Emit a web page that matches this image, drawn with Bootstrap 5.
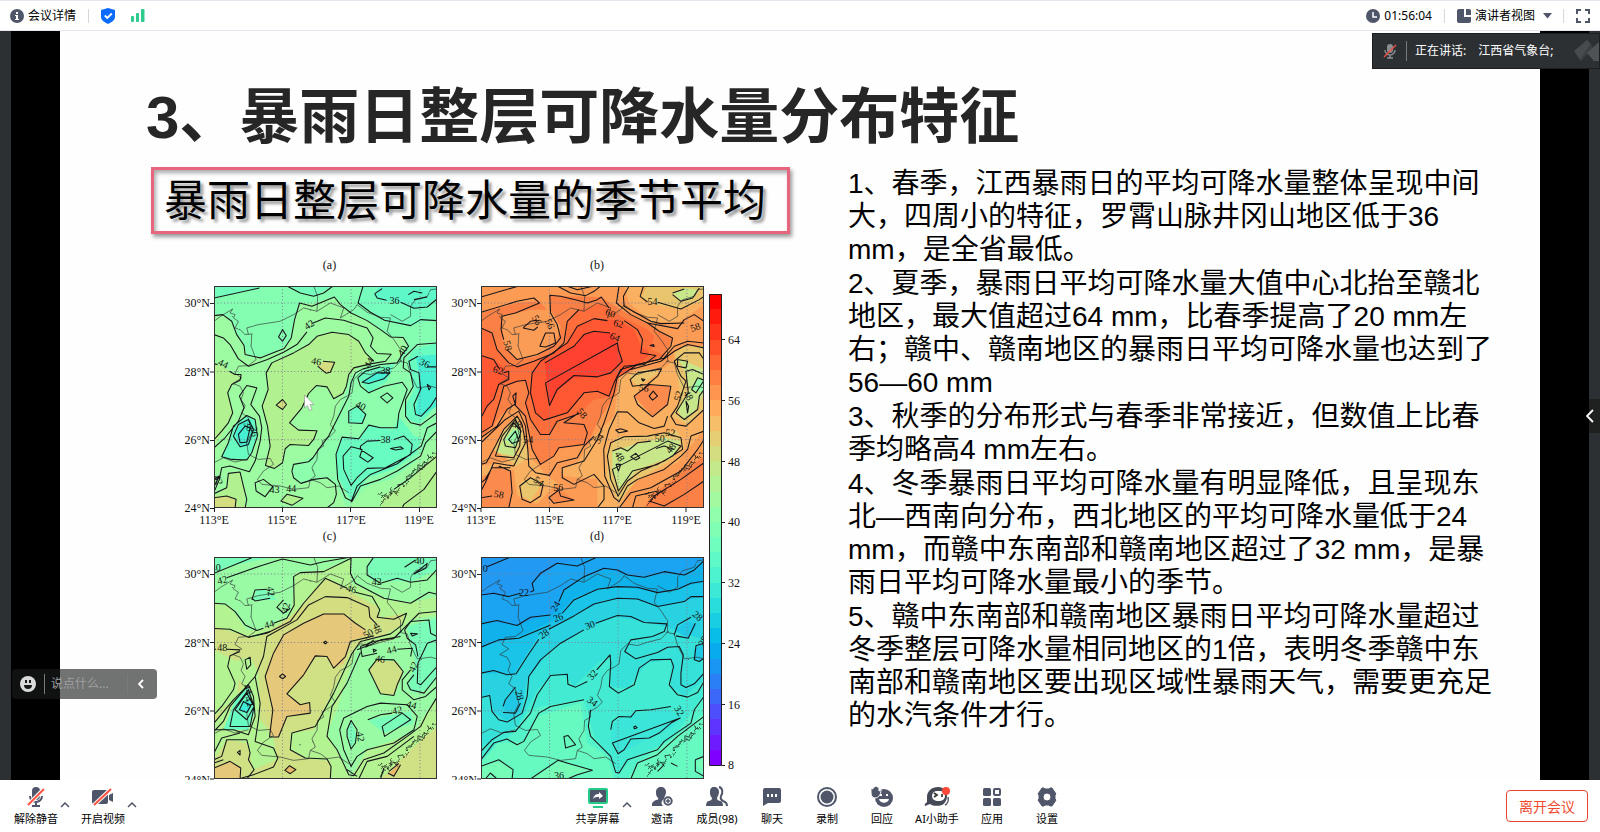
<!DOCTYPE html>
<html lang="zh-CN">
<head>
<meta charset="utf-8">
<meta name="viewport" content="width=device-width, initial-scale=1">
<title>会议</title>
<link href="https://cdn.jsdelivr.net/npm/bootstrap@5.3.0/dist/css/bootstrap.min.css" rel="stylesheet">
<style>
:root{--ink:#50566a;--stage:#2c3033}
body{font-family:"Noto Sans","Noto Sans CJK SC",sans-serif;font-size:12px;line-height:16px;color:#000;background:#fff;overflow:hidden}
button{border:0;background:none;padding:0;color:inherit;font-size:inherit;line-height:inherit}
svg{display:block;flex:none}
.topbar{height:31px;border-top:1px solid #e6e6ee;border-bottom:1px solid #e6e6ee;padding:0 10px}
.rule{width:1px;height:14px;background:#d6d8de}
.view-rule{margin-left:11px}
.stage{background:var(--stage);padding:0 11px;min-height:0}
.letterbox{background:#000;padding:0 49px}
.slide{background:#fefefe;padding:47px 0 0 86px}
.slide h1{font:bold 60px/80px "Liberation Sans","Noto Sans CJK SC",sans-serif;color:#262626;margin:0;white-space:nowrap}
.left-pane{flex:0 0 702px}
.subtitle{width:639px;height:67px;margin:9px 0 16px 5px;border:3px solid #e8667d;box-shadow:2px 3px 4px #0006,inset 2px 3px 4px #0005;font:43px/63px "Liberation Sans","Noto Sans CJK SC",sans-serif;padding-left:10px;text-shadow:3px 3px 3px #0006;white-space:nowrap}
.figure-wrap{margin-left:34px}
.notes{font:28px/33px "Liberation Sans","Noto Sans CJK SC",sans-serif;padding-top:9px;gap:1px;white-space:nowrap}
.notes p{margin:0}
.speaking{top:2px;right:0;width:228px;height:36px;background:var(--stage);border:1px solid #1c1e20;color:#fff;padding-left:9px}
.chat-pill{left:12px;bottom:81px;width:145px;height:30px;border-radius:4px;background:rgba(26,27,28,.62);padding:0 13px 0 8px}
.chat-pill .rule,.speaking .rule{background:#77797b;height:20px}
.chat-pill input{width:68px;background:none;border:0;padding:0;margin-left:6px;color:#fff;outline:0}
.chat-pill input::placeholder{color:#a0a0a0;opacity:1}
.side-toggle{right:0;top:368px;width:11px;height:34px;background:#1f2020}
.side-toggle svg{margin-left:-3px}
.toolbar{height:52px;display:grid;grid-template-columns:1fr auto 1fr;font-size:11px;padding:5px 12px 0 14px}
.tool{width:55px;height:44px;white-space:nowrap}
.tool svg{margin-bottom:2px}
.tool-tight{width:44px}
.caret{width:15px;height:44px;padding:0 0 4px 2px}
.center-tools{padding-left:48px}
.leave{width:82px;height:32px;border:1px solid #e8432f;border-radius:4px;color:#f04a2f;font-size:14px;margin-top:5px}
.leave:hover{background:#fff1ee;color:#f04a2f}
.axis{font:12px "Liberation Serif",serif;fill:#111}
.lvl{font:30px "Liberation Serif",serif;fill:#111}
.iso{fill:none;stroke:#15151a;stroke-width:3.2;stroke-linejoin:round}
.grid-line{fill:none;stroke:#7d7d92;stroke-width:3;stroke-dasharray:3 7}
.border-line{fill:none;stroke:#333a3a;stroke-width:2}
.coast{fill:none;stroke:#111;stroke-width:2.2}
</style>
</head>
<body class="d-flex flex-column vh-100">
<header class="topbar d-flex align-items-center">
  <button class="d-flex align-items-center pe-1" type="button">
    <svg width="14" height="14" viewBox="0 0 14 14"><circle cx="7" cy="7" r="7" fill="#50566a"/><path d="M6 3h2v2H6zM5 6h3v4h1v1H5v-1h1V7H5z" fill="#fff"/></svg>
    <span class="ms-1">会议详情</span>
  </button>
  <span class="rule ms-2 me-2"></span>
  <button type="button" aria-label="安全" class="ms-1"><svg width="14" height="16" viewBox="0 0 14 16"><path d="M7 0l7 2v7c0 3-3 5-7 7C3 14 0 12 0 9V2z" fill="#0a6cff"/><path d="M3.800 7.500l2.500 2.500 4.500-4.500" fill="none" stroke="#fff" stroke-width="1.800"/></svg></button>
  <button type="button" aria-label="网络" class="ms-3"><svg width="14" height="13" viewBox="0 0 14 13" fill="#2ecb8f"><rect y="7" width="3" height="6" rx="1"/><rect x="5" y="4" width="3" height="9" rx="1"/><rect x="10" width="3.500" height="13" rx="1"/></svg></button>
  <div class="ms-auto d-flex align-items-center">
    <svg width="14" height="14" viewBox="0 0 14 14"><circle cx="7" cy="7" r="7" fill="#50566a"/><path d="M7 3v5h4" fill="none" stroke="#fff" stroke-width="1.500"/></svg>
    <span class="ms-1 me-2">01:56:04</span>
    <span class="rule ms-1 me-2"></span>
    <button type="button" class="d-flex align-items-center ms-1">
      <svg width="14" height="14" viewBox="0 0 14 14" fill="#50566a"><path d="M2 0h5v8h7v4a2 2 0 0 1-2 2H2a2 2 0 0 1-2-2V2a2 2 0 0 1 2-2z"/><path d="M9 0h3a2 2 0 0 1 2 2v4H9z"/></svg>
      <span class="ms-1 me-1">演讲者视图</span>
      <svg class="ms-1" width="9" height="6" viewBox="0 0 9 6"><path d="M0 0h9L4.500 5.500z" fill="#50566a"/></svg>
    </button>
    <span class="rule view-rule me-2"></span>
    <button type="button" aria-label="全屏" class="ms-1"><svg width="14" height="14" viewBox="0 0 14 14"><path d="M5 1H1v4M9 1h4v4M5 13H1V9M9 13h4V9" fill="none" stroke="#50566a" stroke-width="2"/></svg></button>
  </div>
</header>

<main class="stage position-relative flex-grow-1 overflow-hidden">
  <div class="letterbox h-100">
    <section class="slide h-100 overflow-hidden">
      <h1>3、暴雨日整层可降水量分布特征</h1>
      <div class="d-flex">
        <div class="left-pane">
          <div class="subtitle">暴雨日整层可降水量的季节平均</div>
          <div class="figure-wrap">
<svg width="580" height="530" viewBox="180 250 580 530" role="img" aria-label="四季可降水量分布图">
<defs>
<filter id="rough" x="-5%" y="-5%" width="110%" height="110%"><feTurbulence type="fractalNoise" baseFrequency=".2" numOctaves="2" seed="4"/><feDisplacementMap in="SourceGraphic" scale="5"/></filter>
<filter id="craggy" x="-10%" y="-10%" width="120%" height="120%"><feTurbulence type="fractalNoise" baseFrequency=".35" numOctaves="3" seed="9"/><feDisplacementMap in="SourceGraphic" scale="11" xChannelSelector="R" yChannelSelector="G"/></filter>
<g id="base">
<path class="grid-line" d="M205 0V667M410 0V667M616 0V667M0 51H667M0 257H667M0 462H667"/>
<g transform="translate(-102 -109)">
<path filter="url(#rough)" class="border-line" d="M102 215L122 200 158 178 150 190 165 195 160 205 175 215 165 235 180 240 195 255 215 253 213 290 228 330 205 348 175 350 165 372 185 385 158 402 180 410 190 430 183 450 195 468 185 490 205 505 215 550 200 580 205 615 235 630 270 627 280 645 250 665 232 690 245 705 300 710 340 720 385 715 390 690 405 680 395 655 410 630 412 600 430 590 425 575 450 560 465 545 450 525 460 500 465 470 480 450 500 440 515 430 520 390 540 370 570 375 600 365 640 355 660 335 660 300 640 270 620 245 630 205 600 203 560 188 530 165 520 180 480 205 490 175 450 160 410 185 370 175 340 195 300 215 235 225 200 235 205 255M400 109L412 140 410 185M630 195L665 215 690 200 690 170 705 150 740 140 750 120 768 118M655 335L680 340 690 375 710 415 750 410 768 415M390 690L420 700 440 715 475 710 505 730M102 640L130 625 165 638 205 628"/>
<path filter="url(#craggy)" class="coast" d="M595 735L606 731 604 742 618 733 620 745 634 728 630 718 642 724 646 736 656 718 652 706 668 704 672 712 682 694 678 682 694 678 702 660 712 663 712 646 724 650 730 636 742 642 744 624 755 626 756 610 768 612M600 768L612 748 626 743 640 725M715 655L726 660 735 640M625 730L655 726M700 662L688 680M612 738l8 4M740 615l10 10"/>
</g></g>
<path id="frame" d="M1 1H666V666H1z" fill="none" stroke="#333" stroke-width="4"/>
</defs>

<g class="axis" text-anchor="middle"><text x="329.500" y="269">(a)</text><text x="597" y="269">(b)</text><text x="329.500" y="540">(c)</text><text x="597" y="540">(d)</text>
<text x="214" y="524">113°E</text><text x="282" y="524">115°E</text><text x="351" y="524">117°E</text><text x="419" y="524">119°E</text><text x="481" y="524">113°E</text><text x="549" y="524">115°E</text><text x="617" y="524">117°E</text><text x="686" y="524">119°E</text></g>
<g class="axis" text-anchor="end"><text x="210" y="307">30°N</text><text x="210" y="376">28°N</text><text x="210" y="444">26°N</text><text x="210" y="512">24°N</text><text x="477" y="307">30°N</text><text x="477" y="376">28°N</text><text x="477" y="444">26°N</text><text x="477" y="512">24°N</text><text x="210" y="578">30°N</text><text x="210" y="647">28°N</text><text x="210" y="715">26°N</text><text x="210" y="784">24°N</text><text x="477" y="578">30°N</text><text x="477" y="647">28°N</text><text x="477" y="715">26°N</text><text x="477" y="784">24°N</text></g>
<path d="M210 303.500h4M210 372h4M210 440.500h4M210 508.500h4M477 303.500h4M477 372h4M477 440.500h4M477 508.500h4M210 574.500h4M210 642.500h4M210 711h4M210 779h4M477 574.500h4M477 642.500h4M477 711h4M477 779h4M214.500 508v4M282.500 508v4M350.500 508v4M419.500 508v4M481 508v4M549.500 508v4M617.500 508v4M686 508v4" stroke="#222"/>

<!-- spring -->
<svg x="214" y="286" width="223" height="222" viewBox="102 109 667 667" preserveAspectRatio="none">
<path fill="#84ffb1" d="M102 109h667v667H102z"/>
<path fill="#74fdbc" d="M545 109L532 160 612 212 690 228 769 205V109zM320 109L400 140 455 109zM102 145L240 115 245 109H102z"/>
<path fill="#5ef8c8" d="M590 118L583 140 600 152 660 158 700 176 740 172 769 150V109H600z"/>
<path fill="#9dfba2" d="M102 198L128 195 155 215 170 255 192 288 202 320 240 322 285 307 312 293 333 265 343 205 358 160 395 163 462 142 480 160 512 188 560 213 600 240 630 262 668 264 684 290 665 315 655 335 620 340 580 345 548 358 525 370 512 400 530 520 480 600 470 640 490 690 512 756 555 710 630 690 700 640 769 540V776H102z"/>
<path fill="#8dfeac" d="M512 380L470 500 445 560 400 620 338 645 338 685 362 702 440 685 468 705 500 775 560 712 640 680 720 600 769 545V280L700 300 660 345 560 350z"/>
<path fill="#b2f18f" d="M262 360L275 340 340 310 385 285 410 260 455 248 505 255 535 275 555 310 580 330 575 343 530 355 508 375 498 410 488 432 460 448 440 412 408 408 385 432 365 475 328 520 355 542 410 544 400 570 385 588 330 585 315 598 307 640 283 657 256 648 270 590 262 530 246 470 264 420zM102 343L125 350 165 375 183 375 180 392 155 405 143 430 158 490 145 520 125 555 102 592zM600 776L605 745 680 700 769 610V776zM102 740L140 715 145 672 180 670 192 715 195 776H102zM302 755L320 735 370 745 335 768z"/>
<path fill="#d4dd80" d="M102 745L140 740 168 750 170 776H102zM290 467L307 450 318 465 307 480zM412 350L430 335 463 338 450 365 437 371z"/>
<path fill="#68fcc1" d="M467 610L485 565 540 565 560 527 640 540 655 500 700 560 722 565 710 610 640 660 560 685 512 756 472 680zM680 330L700 300 769 280V460L740 500 715 522 680 510 675 470 700 420zM125 622L145 580 160 530 200 498 225 510 232 560 215 610 200 632 155 630zM532 385L550 362 640 345 620 395 565 430zM505 485L530 470 558 495 545 522 505 520z"/>
<path fill="#46efd2" d="M705 320L769 315V470L722 500 705 495 718 380zM545 398L590 365 628 370 610 390 565 400zM165 555L185 515 212 510 222 545 205 590 180 592z"/>
<use href="#base" x="102" y="109"/>
<path class="iso" d="M102 145L238 115M320 109L360 130 400 140 430 130 458 109M548 109L540 135 533 160 570 188 612 212 690 228 720 210 769 213M605 117L583 132 590 145 618 152M660 158L700 176 740 172 769 148M683 135L700 125 725 130M700 150L740 142"/>
<path class="iso" d="M102 198L128 195 155 215 170 255 192 288 195 315 240 325 285 307 312 297 333 265 343 210 358 160 395 170 462 142 480 165 512 190 560 213 600 240 630 262 668 264 684 290 665 315 650 340 600 345 548 358 525 370 512 400 505 440 480 490 465 520 445 560 415 600 398 625 385 637 340 645 335 665 340 685 362 702 400 690 440 685 465 705 468 735 460 760 440 776"/>
<path class="iso" d="M102 255L130 265 150 285 175 328 205 350 262 330 310 308 350 285 380 247M395 222L435 205 490 212 560 235 578 265 570 290 590 312 632 314 615 335 570 343 520 355 505 375 498 410 488 432 460 448 440 412 408 408 385 432 365 475 328 520 355 542 410 544 400 570 385 588 330 585 315 598 307 640 283 657 256 648 270 590 262 530 246 470 264 420 258 370 275 340 340 310 385 285 410 260 455 248 505 255 535 275 555 310 580 335"/>
<path class="iso" d="M102 343L113 345M148 365L165 375 183 375 180 392 155 405 143 430 158 490 145 520 125 545 102 571M102 595L135 565 175 515 192 475 178 440 200 408 230 415 212 465 238 500 245 535 240 575 225 635 208 667 150 650 125 655 118 690 102 728M125 622L145 580 160 530 200 498 225 510 232 560 215 610 200 632 155 630zM160 560L175 525 205 510 220 540 205 585 180 592zM175 555L195 530 210 535 200 578 180 580zM102 690L118 680 102 712M102 733L140 715 145 672 180 668 190 710 200 750 195 776M102 745L140 740 168 750 165 776"/>
<path class="iso" d="M307 240L318 258 307 275 295 262zM288 467L307 450 319 465 307 480zM428 335L463 338 450 368 437 371 412 350M225 700L250 690 278 712 255 742 228 725zM302 755L320 735 368 747 335 768zM600 443L620 430 637 445 620 460zM505 485L530 470 556 495 545 522 505 520zM630 597L660 592 668 598 645 602z"/>
<path class="iso" d="M532 385L555 365 600 352M532 385L540 410 565 430 610 410 665 398 680 420 655 490 650 535 600 535 565 527 535 568 485 563 467 615 472 690 495 745 515 756 540 710 600 690 650 665 720 620 735 580 769 545M545 398L590 370 628 370 610 388 565 402zM600 573L560 575 540 590 540 600 578 625 562 638 538 622 545 600 512 592 488 620 490 660 512 708 530 685 560 657 615 655 690 615 695 585 670 560 640 570M769 520L740 535 722 590 650 643 570 675 530 710 512 758M640 720L690 685 769 620M769 665L730 720 670 765 665 776M440 776"/>
<path class="iso" d="M769 280L710 285 670 325 668 355 690 370 698 410 675 450 675 500 690 520 720 527 769 490M769 352L740 352M712 320L685 335 690 360 715 370 720 420 700 465 705 495 722 500 750 470 769 440M740 405l10 8-5 8z"/>
<g class="lvl"><text x="627" y="162">36</text><text x="373" y="240" transform="rotate(-35 380 230)">42</text><text x="393" y="345" transform="rotate(10 405 335)">46</text><text x="113" y="352" transform="rotate(25 128 345)">44</text><text x="526" y="478" transform="rotate(25 540 468)">40</text><text x="600" y="580">38</text><text x="318" y="727">44</text><text x="268" y="732">43</text><text x="550" y="350" transform="rotate(-60 565 340)">44</text><text x="652" y="315" transform="rotate(-60 665 305)">40</text><text x="717" y="350" transform="rotate(25 730 340)">36</text><text x="600" y="372">38</text><text x="193" y="540" transform="rotate(60 207 528)">38</text><text x="208" y="560" transform="rotate(80 225 548)">36</text><text x="105" y="705" transform="rotate(70 120 690)">42</text></g>
<use href="#frame" x="102" y="109"/>
</svg>

<!-- summer -->
<svg x="481" y="286" width="223" height="222" viewBox="92 109 667 667" preserveAspectRatio="none">
<path fill="#fc9b54" d="M92 109h667v667H92z"/>
<path fill="#fb8046" d="M92 190L200 160 265 155 300 190 300 135 340 140 450 142 510 180 600 230 665 270 640 320 560 350 520 380 490 440 440 520 410 585 325 597 310 620 270 645 245 600 220 500 190 465 160 490 100 560 92 565zM580 776L600 740 680 680 759 620V776z"/>
<path fill="#fb9c56" d="M155 200L240 180 300 180 330 230 320 270 260 320 200 330 160 290z"/>
<path fill="#ff6d3a" d="M92 235L125 250 140 300 175 345 205 350 310 310 345 280 350 215 385 180 450 160 510 200 590 240 610 260 600 300 640 318 560 348 500 385 490 440 430 450 385 493 320 515 297 555 270 555 240 510 225 460 235 430 225 392 160 410 130 530 92 550z"/>
<path fill="#ff5832" d="M92 318L130 330 175 365 175 390 145 405 130 450 110 470 92 505zM245 370L270 335 350 280 380 230 430 207 500 212 550 240 570 290 600 315 560 345 500 380 475 440 440 425 400 430 350 490 280 512 255 490 240 430z"/>
<path fill="#ff4230" d="M283 340L370 290 400 255 430 245 480 250 503 290 515 335 480 370 440 380 370 385 320 420 297 470z"/>
<path fill="#f9b060" d="M520 109L535 160 600 215 680 220 759 165V109zM505 380L560 360 640 355 680 320 759 290V540L680 640 540 700 510 776H440L440 690 340 680 330 660 380 640 430 560 490 500zM92 650L200 630 220 600 290 680 320 700 260 765 200 740 190 660 92 680z"/>
<path fill="#e9c66e" d="M590 109L570 145 620 165 690 178 759 150V109zM670 310L700 290 759 290V480L710 525 665 500 690 450zM130 600L160 540 200 500 215 540 235 620 200 650zM470 600L500 565 600 555 680 545 700 590 650 640 560 690 505 757 470 690zM210 700L250 680 275 705 240 755 215 740zM535 380L580 360 630 365 560 410z"/>
<path fill="#c8e68a" d="M665 130L700 115 745 120 720 150 690 155zM680 325L759 360V430L730 490 695 510 680 480 715 420 700 360zM140 610L165 550 200 515 212 560 190 620zM485 605L570 580 640 565 690 575 670 620 560 660 505 720 485 660z"/>
<path fill="#97fca7" d="M165 570L190 540 210 545 195 590zM722 420L740 388 759 392V430z"/>
<path fill="#fb8a4d" d="M550 440L590 405 660 412 650 465 605 502zM295 745L325 720 368 750 320 762zM92 690L140 650 185 670 180 776H92z"/>
<use href="#base" x="92" y="109"/>
<path class="iso" d="M92 142L205 109M92 188L200 155 250 145 267 160 195 190 155 200 152 240 160 270M170 300L200 330 260 315 310 290 330 265 320 225 300 190 298 137 330 140 380 152 410 160 440 150 452 142 475 175M320 109L360 130 405 138 430 125 450 109M535 109L518 140 520 170 600 215 630 222 700 220M505 109L497 160 540 195 590 220 625 245 665 265 660 290 625 330 560 345 510 360 490 400 475 440 440 425 400 430 350 490 280 512 255 490 240 430 245 370 270 335 350 280 380 230 430 207 470 213M578 109L568 140 590 157M620 158L690 178 745 150 759 140M665 130L700 118M745 115L725 145 690 155 665 135M348 109L380 120 430 109"/>
<path class="iso" d="M92 235L125 250 140 300 175 340 200 352 250 335 310 310 340 280 350 215 385 180M283 340L370 290 400 255 430 245 478 250M500 280L503 300 515 335 480 370 440 382 370 378 320 420 297 468 285 400zM92 318L130 330 148 360M160 370L175 365 175 390 145 405 130 450 110 470 92 505M92 550L125 530 150 450 160 410 200 395 225 392 235 430 225 460 240 510 270 555 297 555 320 515 385 493M92 565L140 530 170 480 192 465 225 500 245 600 270 645 310 620 325 595 400 585 410 550 400 525 340 520 385 490M92 580L165 510 205 485 225 530 232 600 235 650 255 670 297 678 320 640 380 625 400 590 430 560"/>
<path class="iso" d="M520 213L560 240 575 270 570 310 615 318 580 345 520 350 500 380 490 430 460 520 440 570 400 635 335 655 335 685 370 705 430 675 460 710 460 750 440 776M598 288l10-3 2 6zM218 235L240 215 260 212M218 235L250 242 262 232M268 290L285 250 310 250 315 280 285 292zM187 440L197 430 195 465zM92 645L108 640 135 590 160 540 200 500 215 525 225 580 190 650 130 640 105 700 92 725M92 745L125 740M145 650L180 665 185 730 175 776M92 700L105 690 125 655 180 655M135 620L155 560 195 510 210 540 208 590 190 625zM160 570L190 520 212 545 195 595 165 590zM175 570L195 545 205 575 185 582z"/>
<path class="iso" d="M208 710L240 685 278 705 270 740 240 760 215 750zM295 745L325 722 330 740 370 752 310 762zM595 440L607 425 620 440 605 452zM550 440L595 405 660 410 650 465 605 502 560 465zM538 390L560 370 632 358 620 380 590 405 545 410zM572 388l10 2-5 5zM495 542L510 538 530 545 505 550zM540 622L555 612 567 625 555 632zM615 597L640 590 670 600M496 645L510 645 503 665z"/>
<path class="iso" d="M459 600L475 540 500 487 530 488 565 520 610 537 640 530 650 500M459 600L462 680 490 745 505 757 530 710 560 690 640 660 690 620 710 600 720 560 759 545M470 620L480 580 520 562 590 560 640 550 690 565 695 600 640 635 570 665 530 695 502 740 480 690zM485 605L510 595 530 605 560 580 600 575M650 575L690 590 665 620 620 645 545 665 503 725 485 660zM505 776L540 730 600 715 690 665 740 600 759 570M545 776L555 740 620 725M600 755L610 740 690 690 759 640M595 755L640 770 700 735 759 695"/>
<path class="iso" d="M759 280L710 275 670 290 640 325 560 345 500 385M759 295L710 285 670 305 630 335 540 360M759 330L745 310 700 310 670 335 690 380 705 395 680 470 660 500 675 525 705 530 759 480M680 330L710 335 705 355 680 350zM759 375L725 360 705 365 712 430 675 490 700 510 740 480 745 440 759 420M722 420L740 385 759 392 735 430zM705 455l8 15-3 20zM590 220L680 237 700 210 730 195 759 215"/>
<g class="lvl"><text x="590" y="165">54</text><text x="718" y="243" transform="rotate(-20 733 233)">58</text><text x="464" y="200" transform="rotate(20 478 190)">60</text><text x="488" y="232" transform="rotate(15 503 222)">62</text><text x="478" y="272" transform="rotate(25 492 262)">64</text><text x="128" y="372" transform="rotate(15 143 362)">62</text><text x="157" y="298" transform="rotate(75 172 288)">58</text><text x="245" y="220" transform="rotate(60 258 210)">56</text><text x="283" y="232" transform="rotate(65 297 222)">56</text><text x="380" y="500" transform="rotate(50 393 490)">58</text><text x="564" y="425" transform="rotate(10 578 415)">56</text><text x="643" y="560" transform="rotate(5 657 550)">52</text><text x="612" y="578">50</text><text x="645" y="608" transform="rotate(-50 658 598)">48</text><text x="492" y="630" transform="rotate(60 506 620)">48</text><text x="698" y="447" transform="rotate(60 712 437)">48</text><text x="668" y="450" transform="rotate(-75 682 440)">52</text><text x="308" y="726">56</text><text x="130" y="745" transform="rotate(10 145 735)">58</text><text x="250" y="705" transform="rotate(35 263 695)">54</text><text x="430" y="578" transform="rotate(-55 444 568)">54</text><text x="218" y="582">54</text><text x="185" y="535">48</text></g>
<use href="#frame" x="92" y="109"/>
</svg>

<!-- autumn -->
<svg x="214" y="557" width="223" height="222" viewBox="102 81 667 667" preserveAspectRatio="none">
<path fill="#b3f391" d="M102 81h667v667H102z"/>
<path fill="#99fca5" d="M102 81H769V200L690 218 620 210 512 160 512 85 430 120 345 130 340 200 330 260 240 300 200 300 150 230 102 220zM530 350L640 330 690 270 769 255V500L700 610 560 660 512 740 440 610 470 540z"/>
<path fill="#79fdb8" d="M102 81H280L140 110 102 130zM575 81L560 110 570 150 690 155 769 120V81zM218 210L230 180 265 180 290 210zM680 290L769 265V440L740 480 700 490 680 470 705 400zM500 600L512 572 530 620 512 660zM562 570L690 545 700 580 610 610zM150 590L170 520 210 485 220 560 200 600z"/>
<path fill="#cfe184" d="M102 290L170 310 230 325 270 300 340 260 400 180 440 145 500 180 590 230 600 265 670 250 660 290 600 320 540 335 510 370 460 480 400 600 330 610 330 660 370 685 450 695 450 748H102V560L170 500 180 400 102 360zM565 420L590 390 650 395 668 430 640 497 600 490zM600 748L700 650 769 590V748z"/>
<path fill="#b3f391" d="M150 400L210 380 235 430 240 570 280 620 290 690 220 720 200 640 140 630 102 690V580L190 470z"/>
<path fill="#68fcc1" d="M130 600L170 500 205 470 225 540 205 600z"/>
<path fill="#3eebd5" d="M175 540L195 510 215 520 200 550z"/>
<path fill="#d5dd81" d="M280 300L370 225 430 205 500 205 570 235 575 280 555 300 520 280 490 252 430 250 300 330 255 440 275 520 268 600 240 500z"/>
<path fill="#e5c879" d="M255 440L280 370 310 315 370 280 430 250 490 252 520 280 555 300 560 315 510 335 490 400 460 415 440 380 405 380 370 440 320 492 360 525 388 520 388 548 320 560 295 622 268 622 275 520zM102 715L150 695 182 715 180 748H102z"/>
<path fill="#e8b96a" d="M314 722L330 708 347 720 330 732zM625 730L660 700 640 740z"/>
<use href="#base" x="102" y="81"/>
<path class="iso" d="M102 130L215 83M140 143L240 108 307 87 390 105 430 95 512 81M102 220L135 222 165 245 195 285 230 302 250 295M280 280L320 265 342 225 340 140 360 128 430 125 512 85 510 130 525 160 610 205 690 220 745 187 769 193M102 296L150 298 205 322 260 310 330 275 370 220 435 145 500 175M525 187L575 200 598 240 590 262 640 268 678 250 665 285 630 312 540 335 515 370 460 490 405 590 335 610 330 660 375 685 440 688 452 710 450 748M580 81L560 110 560 135 600 160 650 145 690 157 740 150 769 118M672 112L705 90M740 100L735 115 700 132zM215 210L225 180 262 178M270 205L225 213 215 205M310 210L290 232 310 250 330 235"/>
<path class="iso" d="M102 358H108M140 358L180 360M180 365L150 378 143 410 165 460 160 480 125 530 102 555M102 580L160 510 190 480 225 440 250 380 260 320 350 270 385 225 435 200 500 203 565 232 568 262 590 285M205 322L270 305M268 622L278 540 255 440 280 370 310 315 370 280 430 252 490 252 525 280 555 300M580 318L510 335 495 380 460 415 440 380 405 378 370 435 320 492 360 525 388 518 390 550 320 560 295 622 268 622M225 440L240 520 235 570 225 635 280 655 293 685 280 712 220 735 175 748M195 390L210 382 212 405 200 418zM430 338l5-4 5 4-5 4zM298 440L307 432 316 440 307 447z"/>
<path class="iso" d="M150 590L160 540 205 480 222 530 210 590zM165 540L200 490 222 530 200 570zM178 540L190 515 212 528 200 548zM102 600L160 600 205 615 225 560 220 500 205 465 150 530 130 575 102 605M102 690L125 680 140 630 200 630 210 670 205 690 222 720 200 748M102 715L150 695 182 715 180 748M172 668l8-6v14zM102 670L125 625 180 610M102 700L130 690M314 722L328 708 347 720 330 732zM625 725L655 702M660 705L640 740 622 730M358 645h3"/>
<path class="iso" d="M540 350L580 335 640 325 690 275 715 250 769 245M540 350L545 380 590 370M650 358L695 355 690 380M565 420L590 388 640 390 668 425 650 465 640 497 600 492zM540 368L500 460 455 530 440 620 470 660 505 735 520 738 550 690 610 670 680 620 720 590 740 550 769 502M478 600L490 565 560 530 600 520 680 525 710 560 700 600 640 640 560 660 530 680 512 710 490 660zM500 600L512 572 530 600 525 640 512 658 500 620zM562 570L600 555 635 550M665 550L690 570 612 620 605 590zM535 748L560 695 620 680 700 620M600 748L610 715M500 720L530 740"/>
<path class="iso" d="M672 300L690 275 745 270 750 310 769 320M672 300L680 325 705 345 712 380M690 420L665 450 665 480 700 510 735 500 769 470M769 330L740 340 712 400 710 460 720 465 769 410M690 310L710 312 695 318zM700 435L680 460 690 480 730 490 769 440M555 352L600 330 660 320M530 360L555 350 580 330M578 358l10 3-8 6z"/>
<g class="lvl"><text x="112" y="160" transform="rotate(-15 127 150)">42</text><text x="574" y="165">42</text><text x="252" y="294" transform="rotate(-15 265 284)">44</text><text x="302" y="243" transform="rotate(-75 317 233)">42</text><text x="498" y="187" transform="rotate(15 512 177)">46</text><text x="576" y="305" transform="rotate(70 590 295)">48</text><text x="548" y="322" transform="rotate(-30 562 312)">50</text><text x="112" y="362">48</text><text x="618" y="370" transform="rotate(-15 633 360)">44</text><text x="584" y="397" transform="rotate(10 598 387)">46</text><text x="635" y="552" transform="rotate(-10 648 542)">42</text><text x="678" y="535" transform="rotate(15 692 525)">44</text><text x="526" y="630" transform="rotate(80 540 620)">42</text><text x="684" y="422" transform="rotate(-65 698 412)">42</text><text x="258" y="193" transform="rotate(80 272 183)">42</text><text x="702" y="103">40</text><text x="190" y="490" transform="rotate(70 205 478)">44</text><text x="197" y="525" transform="rotate(70 210 512)">42</text><text x="92" y="123">40</text></g>
<use href="#frame" x="102" y="81"/>
</svg>

<!-- winter -->
<svg x="481" y="557" width="223" height="222" viewBox="92 81 667 667" preserveAspectRatio="none">
<path fill="#1ba4f1" d="M92 81h667v667H92z"/>
<path fill="#229af3" d="M92 81H430L320 102 250 155 240 190 92 195z"/>
<path fill="#10b2ec" d="M92 275L200 285 310 250 340 180 400 140 470 118 560 142 650 128 700 130 759 90V748H92z"/>
<path fill="#1ac3e8" d="M92 350L220 315 310 270 370 205 440 175 510 170 620 188 759 155V748H92z"/>
<path fill="#28d2e1" d="M92 430L190 433 230 370 270 310 400 240 460 210 560 208 620 230 759 200V748H92z"/>
<path fill="#36e1da" d="M92 500L120 498 130 545 170 575 210 550 230 450 300 360 400 300 490 260 560 270 620 285 645 290 759 330V748H92z"/>
<path fill="#43ebd2" d="M92 650L200 590 260 480 310 435 350 440 370 470 440 400 478 378 480 470 530 475 590 400 660 390 660 470 700 500 759 450V748H92z"/>
<path fill="#54f3ca" d="M92 690L200 600 230 550 270 530 400 510 415 560 430 620 480 680 500 735 540 690 660 630 759 500V748H92z"/>
<path fill="#67fac0" d="M92 700L140 640 220 635 260 560 390 520 410 640 470 680 490 748H92zM530 748L560 700 700 600 759 550V748z"/>
<path fill="#76fdb8" d="M92 710L150 695 190 720 180 748H92zM240 748L325 695 420 720 350 748zM735 700L759 680V735z"/>
<path fill="#3be5d8" d="M485 590L510 560 640 535 690 555 670 590 600 625 505 670 480 630z"/>
<path fill="#20c8e5" d="M158 530L190 480 210 500 205 545 170 550zM670 300L710 275 740 285 710 325zM730 360L759 335V390H730z"/>
<use href="#base" x="92" y="81"/>
<path class="iso" d="M110 110L175 83M92 195L130 190 175 200 210 190M240 186L250 182 245 160 270 130 320 100 380 108 435 83M92 282L140 272 200 287 240 262 300 255M325 215L340 180 400 140 460 115 500 120 530 135 580 142 640 125 700 135 730 120 759 92M92 352L145 330 205 325 300 285M335 250L370 210 440 178 500 170 560 172 620 188 680 178 720 160 759 154M92 430L130 422 170 435 197 432 230 380 265 328M295 298L370 258 430 222 500 205 560 207 620 230 700 215 720 200 759 200M92 503L118 497 125 545 145 570 170 577 215 550 230 500 235 440 270 390 330 340 400 300M435 280L500 257 540 260 580 278 648 282 640 305 605 320 540 330 522 365 555 387 620 368 650 352 685 350 697 375 690 430 690 465 705 473 730 462 759 430"/>
<path class="iso" d="M92 665L125 630 160 608 195 605 240 550 260 495 300 437 350 433 352 463 375 472 410 455M438 420L478 375 480 400 476 470 503 490 550 465 565 415 600 390 660 388 668 410 655 465 680 495 710 502 740 488 759 455M92 690L130 640 170 628 200 645 220 635 265 550 300 530 400 510M420 540L413 590 420 620 450 650 480 680 495 728 505 730 530 690 620 660 640 635 720 580 730 540 759 500M480 600L485 575 505 560 540 562 555 543 600 540 660 530M688 565L660 580 625 610 595 625 540 628 520 660 502 672 485 640zM540 748L560 700 620 675 680 620 759 560M92 710L145 690 188 720 185 748M105 748L120 730 140 748M240 748L322 692 425 722 380 735 350 748M340 620L352 617 375 645 345 655zM549 592l5-3 5 5-8 3zM158 530L165 510 195 472M210 520L195 550 158 548M670 315L680 285 720 262M733 280L712 325 675 318M759 340L735 348 730 390 745 395 759 385M733 690L759 680M733 690V725L759 740M620 725L640 705M660 700L680 710"/>
<g class="lvl"><text x="206" y="198">22</text><text x="300" y="240" transform="rotate(-60 314 230)">24</text><text x="308" y="273" transform="rotate(-20 322 263)">26</text><text x="265" y="322" transform="rotate(-35 280 312)">28</text><text x="403" y="296" transform="rotate(-20 418 286)">30</text><text x="411" y="446" transform="rotate(-50 425 436)">32</text><text x="410" y="525" transform="rotate(35 425 515)">34</text><text x="670" y="552" transform="rotate(60 684 542)">32</text><text x="310" y="748">36</text><text x="725" y="268" transform="rotate(40 740 258)">28</text><text x="193" y="505" transform="rotate(75 207 495)">28</text><text x="742" y="345" transform="rotate(-60 755 335)">28</text><text x="82" y="125">20</text></g>
<use href="#frame" x="92" y="81"/>
</svg>

<svg id="scale-bands" x="709" y="294" width="13" height="471" viewBox="0 0 13 31" preserveAspectRatio="none" shape-rendering="crispEdges"></svg>
<path d="M709.500 294.500h12v471h-12zM722 339.500h3M722 400.500h3M722 461.500h3M722 522.500h3M722 582.500h3M722 643.500h3M722 704.500h3M722 765.500h3" fill="none" stroke="#222"/>
<g class="axis"><text x="728" y="344">64</text><text x="728" y="405">56</text><text x="728" y="466">48</text><text x="728" y="526">40</text><text x="728" y="587">32</text><text x="728" y="648">24</text><text x="728" y="709">16</text><text x="728" y="769">8</text></g>
<path d="M304.500 395v13l3-2.500 2 5 2.500-1-2-5h4z" fill="#fff" stroke="#888" stroke-width=".6"/>
</svg>
          </div>
        </div>
        <div class="notes d-flex flex-column">
          <p>1、春季，江西暴雨日的平均可降水量整体呈现中间<br>大，四周小的特征，罗霄山脉井冈山地区低于36<br>mm，是全省最低。</p>
          <p>2、夏季，暴雨日平均可降水量大值中心北抬至赣北<br>地区，最大值超过64 mm，比春季提高了20 mm左<br>右；赣中、赣南地区的暴雨日平均可降水量也达到了<br>56—60 mm</p>
          <p>3、秋季的分布形式与春季非常接近，但数值上比春<br>季均略高4 mm左右。</p>
          <p>4、冬季暴雨日平均可降水量有明显降低，且呈现东<br>北—西南向分布，西北地区的平均可降水量低于24<br>mm，而赣中东南部和赣南地区超过了32 mm，是暴<br>雨日平均可降水量最小的季节。</p>
          <p>5、赣中东南部和赣南地区暴雨日平均可降水量超过<br>冬季整层可降水量相同地区的1倍，表明冬季赣中东<br>南部和赣南地区要出现区域性暴雨天气，需要更充足<br>的水汽条件才行。</p>
        </div>
      </div>
    </section>
  </div>

  <div class="speaking position-absolute d-flex align-items-center overflow-hidden">
    <svg width="16" height="16" viewBox="0 0 16 16"><rect x="5" y="1" width="6" height="9" rx="3" fill="#8b8e91"/><path d="M3 7a5 5 0 0 0 10 0M8 12v3M5 15h6" fill="none" stroke="#8b8e91" stroke-width="1.500"/><path d="M2 14L14 2" stroke="#e8503f" stroke-width="1.500"/></svg>
    <span class="rule ms-2 me-2"></span><span>正在讲话:</span><span class="ms-2 ps-1 text-nowrap">江西省气象台;</span>
    <svg class="ms-auto" width="26" height="24" viewBox="0 0 26 24"><path d="M1 12L14 1 18 5 7 21z" fill="#484b4e"/><path d="M7 21L18 5 20 9 8 22z" fill="#3c4043"/><path d="M14 14L26 3V22L21 22z" fill="#505356"/></svg>
  </div>

  <div class="chat-pill position-absolute d-flex align-items-center">
    <button type="button" aria-label="表情"><svg width="16" height="16" viewBox="0 0 16 16"><circle cx="8" cy="8" r="8" fill="#dadada"/><path d="M5 4h2v3H5zM9 4h2v3H9zM4 9h8a4 4 0 0 1-8 0z" fill="#17181a"/></svg></button>
    <span class="rule ms-2"></span>
    <input type="text" placeholder="说点什么..." aria-label="说点什么">
    <span class="rule ms-2"></span>
    <button type="button" aria-label="收起" class="ms-auto"><svg width="6" height="10" viewBox="0 0 6 10"><path d="M5 1L1 5l4 4" fill="none" stroke="#fff" stroke-width="1.800"/></svg></button>
  </div>
  <button type="button" class="side-toggle position-absolute" aria-label="展开侧栏"><svg width="10" height="14" viewBox="0 0 10 14"><path d="M7 1L1 7l6 6" fill="none" stroke="#fff" stroke-width="1.800"/></svg></button>
</main>

<footer class="toolbar">
  <div class="d-flex">
    <button type="button" class="tool tool-tight d-flex flex-column align-items-center">
      <svg width="20" height="24" viewBox="0 0 20 24"><rect x="6" y="2" width="8" height="13" rx="4" fill="#50566a"/><path d="M4 11a6 6 0 0 0 12 0M10 17v4M6 21h8" fill="none" stroke="#50566a" stroke-width="2"/><path d="M2 20L18 4" stroke="#fff" stroke-width="4"/><path d="M2 20L18 4" stroke="#ff5340" stroke-width="2"/></svg>解除静音</button>
    <button type="button" class="caret" aria-label="音频选项"><svg width="10" height="6" viewBox="0 0 10 6"><path d="M1 5l4-4 4 4" fill="none" stroke="#50566a" stroke-width="1.500"/></svg></button>
    <button type="button" class="tool tool-tight d-flex flex-column align-items-center ms-2">
      <svg width="24" height="24" viewBox="0 0 24 24"><rect x="1" y="5" width="16" height="14" rx="2" fill="#50566a"/><path d="M18 10l4-2v9l-4-2z" fill="#50566a"/><path d="M3 20L20 4" stroke="#fff" stroke-width="4"/><path d="M3 20L20 4" stroke="#ff5340" stroke-width="2"/></svg>开启视频</button>
    <button type="button" class="caret" aria-label="视频选项"><svg width="10" height="6" viewBox="0 0 10 6"><path d="M1 5l4-4 4 4" fill="none" stroke="#50566a" stroke-width="1.500"/></svg></button>
  </div>
  <div class="center-tools d-flex">
    <button type="button" class="tool tool-tight d-flex flex-column align-items-center">
      <svg width="20" height="24" viewBox="0 0 20 24"><rect x="1" y="4" width="18" height="14" rx="1" fill="#50566a" stroke="#23cb88" stroke-width="2"/><path d="M5 14c1-4 3-5 6-5V7l4 4-4 3v-2c-3 0-4 0-6 2z" fill="#fff"/><path d="M5 22h10" stroke="#23cb88" stroke-width="2"/></svg>共享屏幕</button>
    <button type="button" class="caret" aria-label="共享选项"><svg width="10" height="6" viewBox="0 0 10 6"><path d="M1 5l4-4 4 4" fill="none" stroke="#50566a" stroke-width="1.500"/></svg></button>
    <button type="button" class="tool d-flex flex-column align-items-center">
      <svg width="22" height="24" viewBox="0 0 22 24"><path d="M10 2c3 0 5 2 5 5 0 2-1 4-2 6v1c-3 2-3 5-1 7H1v-2c0-2 2-3 4-4 2 0 3-1 2-2-2-2-2-4-2-6 0-3 2-5 5-5z" fill="#50566a"/><circle cx="17" cy="16" r="3.700" fill="none" stroke="#50566a" stroke-width="2"/><path d="M17 14v4M15 16h4" stroke="#50566a" stroke-width="1.500"/></svg>邀请</button>
    <button type="button" class="tool d-flex flex-column align-items-center">
      <svg width="24" height="24" viewBox="0 0 24 24"><path d="M9 2c3 0 5 2 5 5 0 2-1 4-2 6 0 2 1 2 3 3 2 0 3 2 3 5H1c0-3 1-5 3-5 2-1 3-1 3-3-2-2-2-4-2-6 0-3 1-5 4-5z" fill="#50566a"/><path d="M14 2c4 1 4 6 2 9-1 3 0 4 2 5 3 1 4 2 4 5" fill="none" stroke="#50566a" stroke-width="2"/></svg>成员(98)</button>
    <button type="button" class="tool d-flex flex-column align-items-center">
      <svg width="20" height="24" viewBox="0 0 20 24"><path d="M3 3h14a2 2 0 0 1 2 2v11a2 2 0 0 1-2 2H6l-5 3V5a2 2 0 0 1 2-2z" fill="#50566a"/><path d="M5 9h2v3H5zM9 9h2v3H9zM13 9h2v3h-2z" fill="#fff"/></svg>聊天</button>
    <button type="button" class="tool d-flex flex-column align-items-center">
      <svg width="22" height="24" viewBox="0 0 22 24"><circle cx="11" cy="12" r="9" fill="none" stroke="#50566a" stroke-width="2"/><circle cx="11" cy="12" r="6.500" fill="#50566a"/></svg>录制</button>
    <button type="button" class="tool d-flex flex-column align-items-center">
      <svg width="22" height="24" viewBox="0 0 22 24"><circle cx="13" cy="13" r="9" fill="#50566a"/><path d="M9 9h2v2H9zM15 9h2v2h-2zM8 14h10c-1 5-9 5-10 0z" fill="#fff"/><path d="M0 3l2 1V2h2V1h2v1h2v4l2-1c0 5-3 8-6 8S0 10 0 7z" fill="#50566a" stroke="#fff"/></svg>回应</button>
    <button type="button" class="tool d-flex flex-column align-items-center">
      <svg width="28" height="24" viewBox="0 0 28 24"><path d="M4 12C4 6 9 2 15 2s9 4 9 9-3 8-5 9c-6 2-11 0-12-1l-5 2c-1-2 1-3 2-4z" fill="#444955"/><rect x="9" y="6" width="13" height="10" rx="5" fill="#fff"/><path d="M11 8l3 2-3 2M19 9v3" fill="none" stroke="#333" stroke-width="1.700"/><path d="M25 12c1 4-1 7-3 8" fill="none" stroke="#555b68" stroke-width="1.500"/><circle cx="23" cy="6" r="4" fill="#ff4938"/></svg>AI小助手</button>
    <button type="button" class="tool d-flex flex-column align-items-center">
      <svg width="20" height="24" viewBox="0 0 20 24"><g fill="#50566a"><rect x="1" y="3" width="8" height="8" rx="1.500"/><rect x="1" y="13" width="8" height="8" rx="1.500"/><rect x="11" y="13" width="8" height="8" rx="1.500"/></g><rect x="12" y="4" width="6" height="6" rx="1" fill="none" stroke="#50566a" stroke-width="2"/></svg>应用</button>
    <button type="button" class="tool d-flex flex-column align-items-center">
      <svg width="20" height="24" viewBox="0 0 20 24"><path fill="#50566a" fill-rule="evenodd" stroke="#50566a" stroke-linejoin="round" d="M5 3h2l1 1h4l1-1h2l4 6-1 1v4l1 1-4 6h-2l-1-1H8l-1 1H5l-4-6 1-1v-4L1 9zM10 8a4 4 0 1 0 0 8 4 4 0 0 0 0-8z"/></svg>设置</button>
  </div>
  <div class="d-flex justify-content-end"><button type="button" class="btn leave p-0">离开会议</button></div>
</footer>
<script src="https://cdn.jsdelivr.net/npm/bootstrap@5.3.0/dist/js/bootstrap.bundle.min.js"></script>
<script>
// Rainbow colour scale: 31 bands of 2 mm, 8 mm at the bottom
const bar = document.getElementById('scale-bands');
for (let i = 0; i < 31; i++) {
  const t = i / 30, r = document.createElementNS('http://www.w3.org/2000/svg', 'rect');
  const c = [Math.abs(2 * t - .5), Math.sin(Math.PI * t), Math.cos(Math.PI * t / 2)].map(v => Math.round(Math.min(1, Math.max(0, v)) * 255));
  r.setAttribute('y', 30 - i); r.setAttribute('width', 13); r.setAttribute('height', 1);
  r.setAttribute('fill', `rgb(${c})`);
  bar.appendChild(r);
}
</script>
</body>
</html>
